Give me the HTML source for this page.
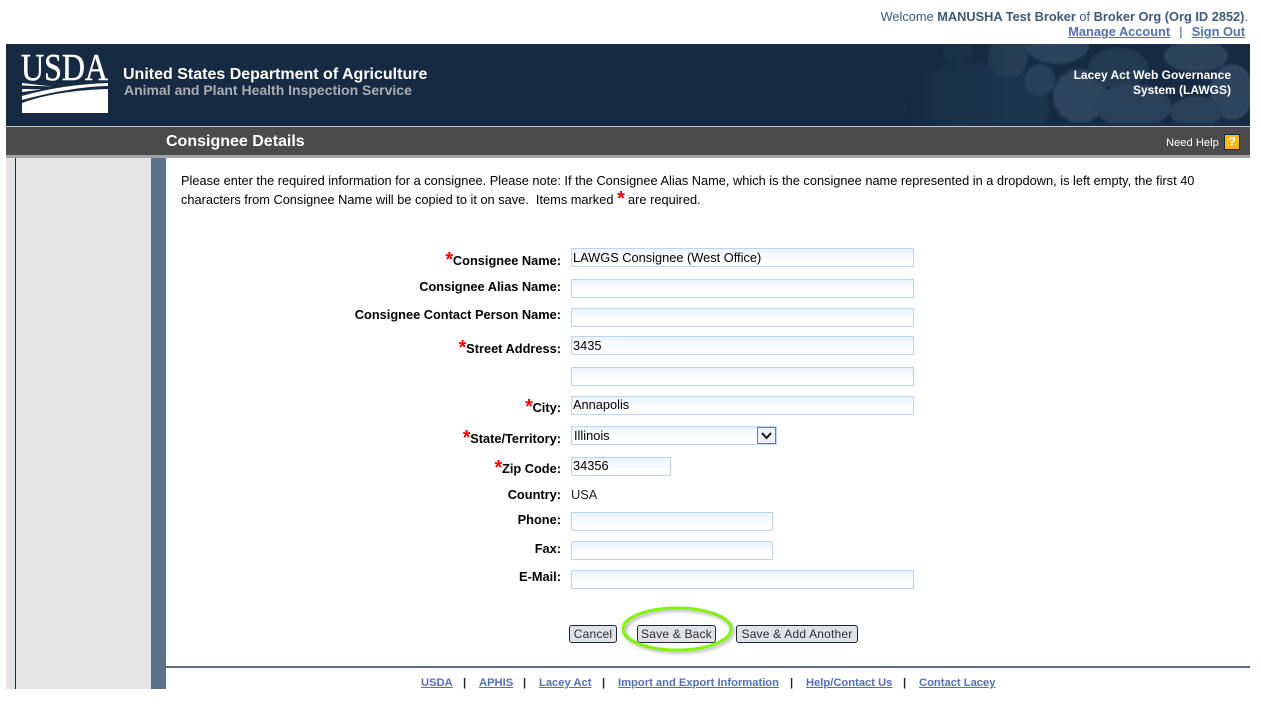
<!DOCTYPE html>
<html><head><meta charset="utf-8"><title>Consignee Details</title>
<style>
html,body{margin:0;padding:0;background:#fff;width:1261px;height:718px;overflow:hidden}
body{font-family:"Liberation Sans",Arial,sans-serif;font-size:12.8px;color:#000;position:relative}
.a{position:absolute;white-space:nowrap}
a{color:#5570b0;text-decoration:underline;font-weight:bold}
.in{position:absolute;left:571px;width:340px;height:17px;border:1px solid #bcd5f2;background:linear-gradient(#edf3fc,#fff 75%);font-size:12.8px;line-height:16px;padding-left:1px;white-space:nowrap;color:#000;box-sizing:content-box}
.l{position:absolute;right:700px;font-weight:bold;color:#000;font-size:12.8px;line-height:16px;white-space:nowrap}
.s{color:#f00;font-size:20px;line-height:10px;font-weight:bold;position:relative;top:1px;display:inline-block;width:7.500px;text-align:center}
.b{position:absolute;top:625px;height:16px;border:1px solid #1b2a3a;border-radius:3px;background:#e0e2e6;font-family:"Liberation Sans",sans-serif;font-size:12px;letter-spacing:.2px;line-height:16px;text-align:center;color:#2a2f36;white-space:nowrap;box-sizing:content-box}
.f{top:676px;font-size:11.2px;font-weight:bold;line-height:14px}
span.f{color:#222}
</style></head><body>

<div class="a" style="right:13px;top:9px;color:#3d5a78;font-size:12.8px;line-height:15px">Welcome <b>MANUSHA Test Broker</b> of <b>Broker Org (Org ID 2852)</b>.</div>
<div class="a" style="right:16px;top:24px;color:#3d5a78;font-size:12.8px;line-height:15px"><a href="#">Manage Account</a><span style="margin:0 2px"> &nbsp;|&nbsp; </span><a href="#">Sign Out</a></div>

<div class="a" style="left:6px;top:44px;width:1244px;height:82px;background:#162b42;overflow:hidden">
<svg width="1244" height="82" style="position:absolute;left:0;top:0">
<defs>
<linearGradient id="g" x1="0" x2="1" y1="0" y2="0"><stop offset="0" stop-color="#162b42" stop-opacity="1"/><stop offset="1" stop-color="#162b42" stop-opacity="0"/></linearGradient>
<filter id="bl"><feGaussianBlur stdDeviation="1"/></filter>
</defs>
<g filter="url(#bl)">
<ellipse cx="971" cy="64" rx="72" ry="46" fill="#1f364f"/>
<ellipse cx="951" cy="6" rx="15" ry="14" fill="#1f3650"/>
<ellipse cx="1002" cy="13" rx="20" ry="21" fill="#263d56"/>
<ellipse cx="1051" cy="0" rx="32" ry="20" fill="#2b425b"/>
<ellipse cx="1034" cy="36" rx="15" ry="16" fill="#27405a"/>
<ellipse cx="1074" cy="52" rx="27" ry="27" fill="#2e455e"/>
<ellipse cx="1112" cy="24" rx="30" ry="20" fill="#233a52"/>
<ellipse cx="1127" cy="62" rx="38" ry="22" fill="#2a415a"/>
<ellipse cx="1190" cy="12" rx="32" ry="16" fill="#2b425a"/>
<ellipse cx="1226" cy="48" rx="22" ry="28" fill="#2e4560"/>
<ellipse cx="1190" cy="68" rx="26" ry="16" fill="#2a4159"/>
</g>
<rect x="900" y="0" width="110" height="82" fill="url(#g)"/>
<rect x="930" y="79" width="314" height="3" fill="#1a3049"/>
<text x="15" y="36" font-family="Liberation Serif" font-size="38" fill="#fff" stroke="#fff" stroke-width=".5" textLength="87" lengthAdjust="spacingAndGlyphs">USDA</text>
<path d="M16 59C40 50 70 46 102 45V69H16Z" fill="#fff"/>
<path d="M102 39V42C76 42.500 46 48 16 56V52C44 44 72 40 102 39Z" fill="#fff"/>
<path d="M16 39L46 42.500 16 41.500Z" fill="#fff"/>
<path d="M16 45L36 45.500 16 48Z" fill="#fff"/>
</svg>
<div class="a" style="left:117px;top:22px;font-weight:bold;font-size:16px;line-height:18px;color:#fff">United States Department of Agriculture</div>
<div class="a" style="left:118px;top:38px;font-weight:bold;font-size:14px;line-height:17px;color:#a9adb3">Animal and Plant Health Inspection Service</div>
<div class="a" style="right:19px;top:24px;text-align:right;font-weight:bold;font-size:12px;line-height:14.500px;color:#fff">Lacey Act Web Governance<br>System (LAWGS)</div>
</div>

<div class="a" style="left:6px;top:126px;width:1244px;height:1px;background:#c4c4c4"></div>
<div class="a" style="left:6px;top:127px;width:1244px;height:28px;background:#4b4b4b"></div>
<div class="a" style="left:6px;top:155px;width:1244px;height:3px;background:#a2a2a2"></div>
<div class="a" style="left:166px;top:132px;font-weight:bold;font-size:16px;line-height:19px;color:#fff">Consignee Details</div>
<div class="a" style="left:1166px;top:136px;font-size:11.200px;line-height:14px;color:#fff">Need Help</div>
<div class="a" style="left:1224px;top:134px;width:14px;height:14px;background:#fdb813;border:1px solid #16283c;color:#fff;font-weight:bold;font-size:13px;line-height:14px;text-align:center">?</div>

<div class="a" style="left:6px;top:158px;width:145px;height:531px;background:#e5e5e5"></div>
<div class="a" style="left:15px;top:158px;width:1px;height:531px;background:#1a2c44"></div>
<div class="a" style="left:151px;top:158px;width:15px;height:531px;background:#5d7286"></div>

<div class="a" style="left:181px;top:171px;font-size:12.800px;line-height:19px;color:#000">Please enter the required information for a consignee. Please note: If the Consignee Alias Name, which is the consignee name represented in a dropdown, is left empty, the first 40<br>characters from Consignee Name will be copied to it on save.&nbsp; Items marked <span class="s">*</span> are required.</div>

<div class="l" style="top:253px"><span class="s">*</span>Consignee Name:</div>
<div class="in" style="top:248px;line-height:17px">LAWGS Consignee (West Office)</div>
<div class="l" style="top:279px">Consignee Alias Name:</div>
<div class="in" style="top:279px"></div>
<div class="l" style="top:307px">Consignee Contact Person Name:</div>
<div class="in" style="top:308px"></div>
<div class="l" style="top:341px"><span class="s">*</span>Street Address:</div>
<div class="in" style="top:336px;line-height:17px">3435</div>
<div class="in" style="top:367px"></div>
<div class="l" style="top:400px"><span class="s">*</span>City:</div>
<div class="in" style="top:396px">Annapolis</div>
<div class="l" style="top:431px"><span class="s">*</span>State/Territory:</div>
<div class="in" style="top:426px;width:202px;padding-left:2px;line-height:17px">Illinois</div>
<div class="a" style="left:757px;top:427px;width:17px;height:15px;background:#eef0f3;border:1px solid #6b7f96;box-sizing:content-box"><svg width="17" height="15" style="display:block"><path d="M4 5L8.500 10L13 5" stroke="#111" stroke-width="2" fill="none"/></svg></div>
<div class="l" style="top:461px"><span class="s">*</span>Zip Code:</div>
<div class="in" style="top:457px;width:97px">34356</div>
<div class="l" style="top:487px">Country:</div>
<div class="a" style="left:571px;top:487px;line-height:16px;color:#222">USA</div>
<div class="l" style="top:512px">Phone:</div>
<div class="in" style="top:512px;width:199px"></div>
<div class="l" style="top:541px">Fax:</div>
<div class="in" style="top:541px;width:199px"></div>
<div class="l" style="top:569px">E-Mail:</div>
<div class="in" style="top:570px"></div>

<div class="b" style="left:569px;width:46px">Cancel</div>
<div class="b" style="left:637px;width:77px">Save &amp; Back</div>
<div class="b" style="left:736px;width:120px">Save &amp; Add Another</div>
<svg class="a" style="left:615px;top:600px" width="125" height="60">
<defs><filter id="sh"><feGaussianBlur stdDeviation="1.500"/></filter></defs>
<ellipse cx="64" cy="31" rx="54" ry="21" fill="none" stroke="#666" stroke-opacity=".5" stroke-width="3" filter="url(#sh)"/>
<ellipse cx="62" cy="29" rx="54" ry="21" fill="none" stroke="#84f30f" stroke-width="3"/>
</svg>

<div class="a" style="left:166px;top:666px;width:1084px;height:2px;background:#5d6b7f"></div>
<a class="a f" href="#" style="left:421px">USDA</a><span class="a f" style="left:463px">|</span>
<a class="a f" href="#" style="left:479px">APHIS</a><span class="a f" style="left:523px">|</span>
<a class="a f" href="#" style="left:539px">Lacey Act</a><span class="a f" style="left:602px">|</span>
<a class="a f" href="#" style="left:618px">Import and Export Information</a><span class="a f" style="left:790px">|</span>
<a class="a f" href="#" style="left:806px">Help/Contact Us</a><span class="a f" style="left:903px">|</span>
<a class="a f" href="#" style="left:919px">Contact Lacey</a>
</body></html>
